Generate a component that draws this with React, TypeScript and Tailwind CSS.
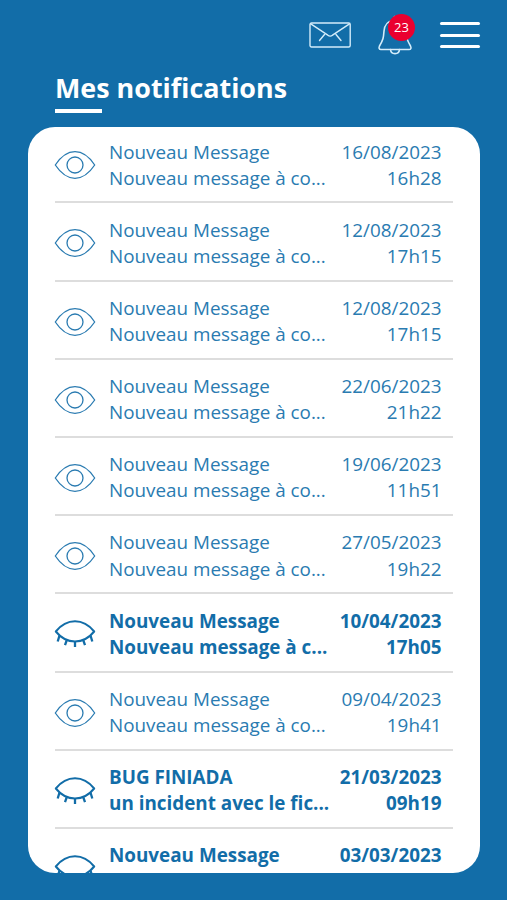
interface Notification {
  id: number;
  title: string;
  preview?: string;
  date: string;
  time?: string;
  unread?: boolean;
}

const notifications: Notification[] = [
  { id: 1, title: 'Nouveau Message', preview: 'Nouveau message à co...', date: '16/08/2023', time: '16h28' },
  { id: 2, title: 'Nouveau Message', preview: 'Nouveau message à co...', date: '12/08/2023', time: '17h15' },
  { id: 3, title: 'Nouveau Message', preview: 'Nouveau message à co...', date: '12/08/2023', time: '17h15' },
  { id: 4, title: 'Nouveau Message', preview: 'Nouveau message à co...', date: '22/06/2023', time: '21h22' },
  { id: 5, title: 'Nouveau Message', preview: 'Nouveau message à co...', date: '19/06/2023', time: '11h51' },
  { id: 6, title: 'Nouveau Message', preview: 'Nouveau message à co...', date: '27/05/2023', time: '19h22' },
  { id: 7, title: 'Nouveau Message', preview: 'Nouveau message à c...', date: '10/04/2023', time: '17h05', unread: true },
  { id: 8, title: 'Nouveau Message', preview: 'Nouveau message à co...', date: '09/04/2023', time: '19h41' },
  { id: 9, title: 'BUG FINIADA', preview: 'un incident avec le fic...', date: '21/03/2023', time: '09h19', unread: true },
  { id: 10, title: 'Nouveau Message', date: '03/03/2023', unread: true },
];

const EyeOpenIcon = () => (
  <svg width="42" height="30" viewBox="0 0 42 30" fill="none" stroke="currentColor" strokeWidth="1.3" strokeLinejoin="round">
    <path d="M1.300 15C7 6.500 13.500 1.700 21 1.700S35 6.500 40.700 15C35 23.500 28.500 28.300 21 28.300S7 23.500 1.300 15Z" />
    <circle cx="21" cy="15" r="8" />
  </svg>
);

const EyeClosedIcon = () => (
  <svg width="42" height="30" viewBox="0 0 42 30" fill="none" stroke="currentColor" strokeWidth="2" strokeLinejoin="round">
    <path d="M1.800 12.500C7.500 5.500 13.500 2.300 21 2.300S34.500 5.500 40.200 12.500C34.500 19.500 28.500 22.500 21 22.500S7.500 19.500 1.800 12.500Z" />
    <path d="M5.500 16.500L3.700 22.500M13 20.500L11 26.200M21 22V28M29 20.500L31 26.200M36.500 16.500L38.300 22.500" strokeWidth="2.300" />
  </svg>
);

const Header = () => (
  <header className="flex h-[70px] items-start pl-[309px]">
    <svg className="mt-[22px]" width="42" height="26" viewBox="0 0 42 26" fill="none" stroke="#d3ecfa" strokeWidth="1.400" strokeLinecap="round" strokeLinejoin="round">
      <rect x="1" y="1" width="40.200" height="24" rx="1.500" />
      <path d="M1.800 1.800L18.800 13.200Q21.200 15 23.500 13.200L40.500 1.800M15.500 12.500L10.500 18.500M27 12.500L32 18.500" />
    </svg>
    <div className="relative ml-[26px] mt-[15px]">
      <svg width="36" height="40" viewBox="0 0 36 40" fill="none" stroke="#d3ecfa" strokeWidth="1.600" strokeLinecap="round" strokeLinejoin="round">
        <path d="M18 5C11 5.500 7.500 10.500 7 16C6.500 23 6.200 24.500 2.500 31C1.600 33 2 34.500 4 34.500H32C34 34.500 34.500 33 33.500 31C30 25 29.500 23 29 16C28.500 10.500 25 5.500 18 5ZM17.500 3V1.500" />
        <path d="M13.500 34.500C14 40 22 40 22.500 34.500" />
      </svg>
      <span className="absolute -top-[1px] left-[11px] flex h-[27px] w-[27px] items-center justify-center rounded-full bg-[#ea002f] text-[13px] leading-none text-white">
        23
      </span>
    </div>
    <div className="ml-[27px] mt-[22px] flex w-[40px] flex-col gap-[8.600px]">
      <span className="h-[3px] rounded-full bg-white" />
      <span className="h-[3px] rounded-full bg-white" />
      <span className="h-[3px] rounded-full bg-white" />
    </div>
  </header>
);

const NotificationRow = ({ item }: { item: Notification }) => (
  <li
    className={`flex h-[78.200px] shrink-0 items-start border-b-2 border-[#dddddd] pr-[11.500px] text-[18.850px] leading-[26.200px] ${
      item.unread ? 'font-bold text-[#126da8]' : 'text-[#2a7bb1]'
    }`}
  >
    <div className="-ml-px mt-[25px] w-[55px] shrink-0">
      {item.unread ? <EyeClosedIcon /> : <EyeOpenIcon />}
    </div>
    <div className="mt-[13.300px] flex-1 whitespace-nowrap">
      <p>{item.title}</p>
      {item.preview && <p>{item.preview}</p>}
    </div>
    <div className="mt-[13.300px] whitespace-nowrap text-right">
      <p>{item.date}</p>
      {item.time && <p>{item.time}</p>}
    </div>
  </li>
);

const App = () => {
  return (
    <div className="flex h-[900px] w-[507px] flex-col overflow-hidden bg-[#126da8] font-['Open_Sans',sans-serif]">
      <Header />
      <div className="flex h-[57px] shrink-0 flex-col items-start pl-[55px]">
        <h1 className="text-[26.900px] font-bold leading-[36px] text-white">Mes notifications</h1>
        <span className="mt-[3px] h-[4px] w-[47px] bg-white" />
      </div>

      <main className="mx-[28px] mr-[27px] h-[746px] shrink-0 overflow-hidden rounded-[27px] bg-white px-[27px]">
        <ul className="-mt-[1.800px] flex flex-col">
          {notifications.map((item) => (
            <NotificationRow key={item.id} item={item} />
          ))}
        </ul>
      </main>
    </div>
  );
};

export default App;
